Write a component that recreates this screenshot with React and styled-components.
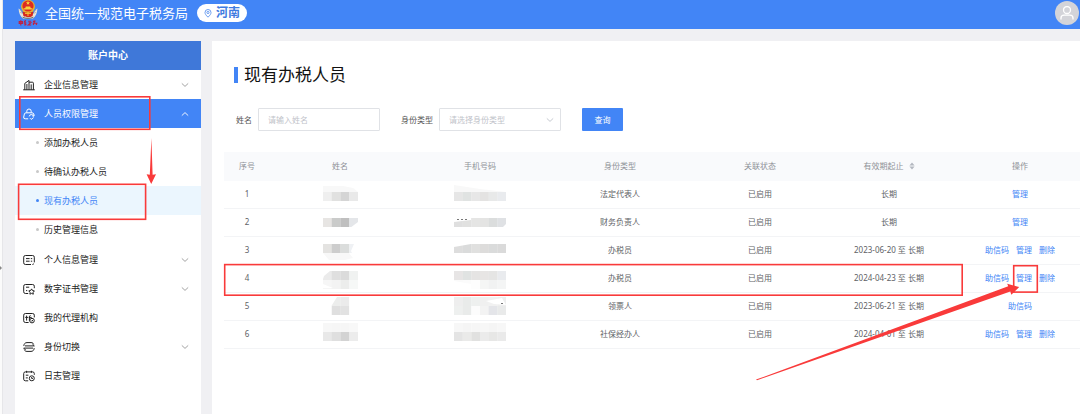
import React from 'react';
import styled, { createGlobalStyle } from 'styled-components';

const GlobalStyle = createGlobalStyle`
  * { box-sizing: border-box; }
  body { margin: 0; background: #f0f0f3; }
  body, button, input, select {
    font-family: "Noto Sans", "Noto Sans CJK SC", sans-serif;
  }
  button { border: 0; background: none; padding: 0; margin: 0; cursor: pointer; }
  a { text-decoration: none; }
`;

const Page = styled.div`
  position: relative;
  min-height: 100vh;
  display: flex;
  overflow: hidden;
`;

const Gutter = styled.div`
  width: 3px;
  flex: none;
  display: flex;
  background: #fbfbfb;
  border-right: 1px solid #e6e6e9;
  svg { margin-top: 265px; flex: none; }
`;

const Shell = styled.div`
  flex: 1;
  min-width: 0;
  display: flex;
  flex-direction: column;
`;

const Header = styled.header`
  height: 29px;
  display: flex;
  align-items: center;
  padding: 0 1px 3px 15px;
  background: #4285f6;
  color: #fff;
  h1 { margin: 0 9px 0 7px; font-size: 13px; line-height: 18px; font-weight: 400; white-space: nowrap; }
`;

const Region = styled.button`
  height: 18px;
  display: flex;
  align-items: center;
  gap: 4px;
  padding: 0 7px;
  border-radius: 9px;
  background: #fff;
  color: #3f7be0;
  font-size: 12px;
  line-height: 18px;
  font-weight: 700;
`;

const Avatar = styled.button`
  width: 24px;
  height: 24px;
  flex: none;
  margin-left: auto;
  border-radius: 50%;
  background: #d3d4d9;
  display: flex;
  align-items: center;
  justify-content: center;
`;

const Body = styled.div`
  flex: 1;
  display: flex;
  gap: 11px;
  padding: 12px 0 0 12px;
`;

const Sidebar = styled.nav`
  width: 186px;
  flex: none;
  background: #fff;
  h2 {
    margin: 0; height: 29px; line-height: 29px; text-align: center;
    background: #3f78d9; color: #fff; font-size: 10px; font-weight: 700;
  }
  ul { list-style: none; margin: 0; padding: 0; }
  ul ul { padding-bottom: 1px; }
`;

const MenuItem = styled.button`
  width: 100%;
  height: 29px;
  display: flex;
  align-items: center;
  gap: 9px;
  padding: 0 12px 0 8px;
  font-size: 9px;
  line-height: 14px;
  text-align: left;
  color: ${p => (p.$open ? '#fff' : '#222')};
  background: ${p => (p.$open ? '#4285f6' : '#fff')};
  span { flex: 1; }
`;

const SubItem = styled.a`
  height: 29px;
  display: flex;
  align-items: center;
  gap: 5px;
  padding-left: 21px;
  font-size: 9px;
  line-height: 14px;
  color: ${p => (p.$active ? '#4285f6' : '#222')};
  background: ${p => (p.$active ? '#ebf6fe' : '#fff')};
  &::before {
    content: '';
    width: 3px; height: 3px; border-radius: 50%;
    background: ${p => (p.$active ? '#4285f6' : '#c8c8c8')};
  }
`;

const Main = styled.main`
  flex: 1;
  min-width: 0;
  padding: 22px 0 0 12px;
  background: #fff;
`;

const PageTitle = styled.h2`
  display: flex;
  align-items: center;
  gap: 6px;
  margin: 0 0 22px 10px;
  height: 23px;
  color: #111;
  font-size: 17px;
  line-height: 23px;
  font-weight: 400;
  &::before { content: ''; width: 4px; height: 16px; background: #4285f6; }
`;

const Filters = styled.form`
  display: flex;
  align-items: center;
  gap: 21px;
  margin: 0 0 21px 12px;
`;

const Field = styled.div`
  display: flex;
  align-items: center;
  gap: 6px;
  label { font-size: 8px; line-height: 12px; color: #555; white-space: nowrap; }
`;

const TextInput = styled.input`
  width: 122px;
  height: 23px;
  padding: 0 9px;
  border: 1px solid #e0e2e6;
  border-radius: 1px;
  outline: 0;
  font-size: 8px;
  color: #555;
  &::placeholder { color: #bfc3ca; }
`;

const SelectBox = styled.div`
  display: grid;
  align-items: center;
  select {
    grid-area: 1 / 1;
    appearance: none;
    width: 122px;
    height: 23px;
    padding: 0 9px;
    border: 1px solid #e0e2e6;
    border-radius: 1px;
    background: #fff;
    font-size: 8px;
    color: #bfc3ca;
  }
  svg { grid-area: 1 / 1; justify-self: end; margin-right: 7px; pointer-events: none; }
`;

const SearchButton = styled.button`
  width: 41px;
  height: 23px;
  border-radius: 1px;
  background: #4285f6;
  color: #fff;
  font-size: 8px;
`;

const Table = styled.table`
  width: 100%;
  table-layout: fixed;
  border-collapse: separate;
  border-spacing: 0;
  font-size: 8px;
  line-height: 12px;
  text-align: center;
  th, td { padding: 0 0 2px; white-space: nowrap; }
  th { height: 29px; background: #f9fafc; color: #8f9298; font-weight: 400; }
  td { height: 28px; border-bottom: 1px solid #f3f4f6; color: #606266; }
  th:last-child, td:last-child { padding-left: 12px; }
  td > svg { display: block; margin: 0 auto; }
`;

const SortLabel = styled.button`
  display: inline-flex;
  align-items: center;
  gap: 5px;
  font-size: 8px;
  line-height: 12px;
  color: inherit;
`;

const Actions = styled.div`
  display: flex;
  justify-content: center;
  gap: 7px;
  a { color: #4285f6; }
`;

const Marks = styled.svg`
  position: absolute;
  top: 0;
  left: 0;
  pointer-events: none;
`;

const Chevron = ({ up, color = '#999' }) => (
  <svg width="8" height="6" viewBox="0 0 8 6" fill="none" stroke={color} strokeWidth="0.9">
    <path d={up ? 'M0.8 4.6 4 1.6 7.2 4.6' : 'M0.8 1.4 4 4.4 7.2 1.4'} />
  </svg>
);

const icons = {
  company: <path d="M.2 10.800h11.600M1.800 10.800V4.400L6 1.400v9.400M6 3.200h3.400a1 1 0 0 1 1 1v6.600M3.900 5v5.800M8.200 5.400v5.400" />,
  people: (
    <>
      <path d="M3.800 4.600V3.200a2.200 2.200 0 0 1 4.400 0v1.400M5.200 10.800H2.200A1.500 1.500 0 0 1 .7 9l.7-3A1.600 1.600 0 0 1 2.900 4.800h6.200a1.600 1.600 0 0 1 1.600 1.200l.2 1" />
      <path d="M6.200 8.400a2.300 2.300 0 0 1 4.400-.4M11.300 6.800l-.5 1.500-1.500-.4M7 10.200l1.200 1.200 2.400-1.800" />
    </>
  ),
  person: <path d="M8 10.500H2.400A1.700 1.700 0 0 1 .7 8.800V3.200a1.700 1.700 0 0 1 1.700-1.700h7.200a1.700 1.700 0 0 1 1.700 1.700v5.200M3 4.600h3.600M7.800 4.600h1.400M3 7.200h3.600M7.800 7.200h1.400M9.400 10.500l1.500-.7" />,
  cert: (
    <>
      <path d="M5.200 10.500H2.400A1.700 1.700 0 0 1 .7 8.800V3.200a1.700 1.700 0 0 1 1.700-1.700h7.200a1.700 1.700 0 0 1 1.700 1.700v2M3 4.200h3.200M3 7.600h1.200" />
      <path d="m8.600 5.900.9 1.600 1.900.4-1.300 1.400.2 1.900-1.700-.8-1.700.8.2-1.900-1.300-1.400 1.900-.4z" />
    </>
  ),
  agency: (
    <>
      <path d="M5.600 10.500H2.400A1.700 1.700 0 0 1 .7 8.800V3.200a1.700 1.700 0 0 1 1.700-1.700h7.200a1.700 1.700 0 0 1 1.700 1.700v2.200M3.600 3.600v5M2.200 5.400h3M6.400 8.800V4.800c0-.8.4-1.200 1.200-1.200M5.900 5.400h2.800" />
      <circle cx="9" cy="8.600" r="2.300" />
      <path d="m8 8.500.8.800 1.300-1.400" />
    </>
  ),
  swap: <path d="M.8 4.900C1 2.900 2 1.600 4 1.600h4c1.400 0 2.200.6 2.700 1.600M2 4.900h9.300L9.400 3M11.200 7.100c-.2 2-1.200 3.300-3.200 3.300H4c-1.400 0-2.200-.6-2.700-1.600M10 7.100H.7L2.600 9" />,
  log: (
    <>
      <path d="M5.200 10.800H2.400A1.700 1.700 0 0 1 .7 9.100V3.600a1.700 1.700 0 0 1 1.700-1.700h7.200a1.700 1.700 0 0 1 1.700 1.700v1.200M3.600.8v2M8.400.8v2M2.800 5.200h2.600M2.800 7.900h2" />
      <circle cx="8.800" cy="8.300" r="2.500" />
      <path d="M8.700 7v1.500h1.200" />
    </>
  ),
};

const MenuIcon = ({ name }) => (
  <svg width="12" height="12" viewBox="0 0 12 12" fill="none" stroke="currentColor" strokeWidth="1" strokeLinejoin="round">
    {icons[name]}
  </svg>
);

const Emblem = () => (
  <svg width="20" height="26" viewBox="0 0 20 26">
    <path d="M.6 8.6c1.6 1 2.6 2.4 3.4 4.4l6 3 6-3c.8-2 1.8-3.4 3.4-4.4-.2 4-1.4 7.8-4.4 9.8H5C2 16.400.8 12.600.6 8.600z" fill="#e9e4d8" />
    <path d="M2 12.200l3.600 2M1.600 10l3 1.800M18 12.200l-3.600 2M18.400 10l-3 1.800" stroke="#a9a9a0" strokeWidth=".6" />
    <circle cx="10" cy="6.600" r="6.900" fill="#e8b42c" />
    <circle cx="10" cy="6" r="5.600" fill="#dd2b22" />
    <path d="m10 .8.6 1.400 1.500.1-1.200 1 .4 1.500-1.300-.8-1.300.8.4-1.500-1.200-1 1.500-.1zM5.600 8.200h1.600l.6-1.600h4.400l.6 1.600h1.600v1.400H5.600z" fill="#f7d33e" />
    <path d="M4.600 11.600c3.400 1.600 7.400 1.600 10.800 0l-.8 4.400c-2.600 1.600-6.600 1.600-9.200 0z" fill="#d5281f" />
    <path d="M7 13.400h6M10 11.800v4.200" stroke="#f2c437" strokeWidth="1" />
    <path d="M4.600 17.200c3 1.500 7.800 1.500 10.800 0" stroke="#66665c" strokeWidth=".9" fill="none" />
    <g fill="none" stroke="#c0203f" strokeWidth="1.100">
      <path d="M1.200 21.600h3.200v1.800H1.200zM2.800 20.200v5.200M6 21.400l2-.8M5.800 23h2.600M7 21v4l1.400-.6M10.200 21.200h3M10.600 22.800h2.200l-2.600 2.200h3M15 21.400l2.600-.4M14.800 23.200h4l-.6 1.800M16.800 20.600l-1.600 4.400" />
    </g>
  </svg>
);

// Masked personal data: rows of cell colours, an optional cut-out shape and leftover dots
const masks = [
  {
    name: { y: 11, rows: [['#efefef', '#e1e1e0', '#d5d5d5', '#e9e9e9']], haze: 'M0 5h20l10 2 5 4H0z' },
    phone: { y: 11, rows: [['#e6e6e6', '#e0e3e2', '#e7e7e7', '#e4e3e2', '#e8e9e9', '#e9ebee']], haze: 'M0 4l26 4 26 3H0z' },
  },
  {
    name: { y: 9, rows: [['#e7e5e3', '#cacbca', '#bfbfbf', '#e4e6e9']], cut: 'M35 13v6h-8z' },
    phone: { y: 9, rows: [['#dfdfdf', '#e1e1e0', '#e5e5e4', '#e4e4e3', '#dbdddd', '#dfe1e4']], cut: 'M0 9h17v2l-17 2zM52 15v4h-4z', dots: [3, 7, 11] },
  },
  {
    name: { y: 7, rows: [['#e4e3e1', '#cdcdcd', '#dbdddc', '#eff1f4']], cut: 'M31 7h4v9h-6l-1-2z', haze: 'M0 16h26l4 5-8 2H6z' },
    phone: { y: 7, rows: [['#dddddd', '#dadbdb', '#e0e0df', '#dddcdb', '#dadbdb', '#dadada']], cut: 'M0 6h17v1L0 10z' },
  },
  {
    name: { y: 6, rows: [['#ebebeb', '#dfdfdf', '#dbdbdb', '#f0f2f1'], ['#f6f6f6', '#f3f3f3', '#ecedec', '#f6f8f7']], cut: 'M0 6h7l-6 5-1 3zM0 19v4h10z' },
    phone: { y: 6, rows: [['#e7e5e5', '#e0e3e2', '#e5e4e3', '#e7e5e4', '#e5e5e4', '#e9ebee'], ['#fafafa', '#fbfbfb', '#fdfdfd', '#f5f6f5', '#f1f2f2', '#f4f5f5']], cut: 'M0 16l17 3v5H0z' },
  },
  {
    name: { y: 4, rows: [['#fff', '#ecedec', '#ebebeb', '#fff'], ['#fff', '#dfdfdf', '#e2e2e2', '#fff']], cut: 'M8 4h6l-5 8H8z' },
    phone: { y: 4, rows: [['#eeeeee', '#e9ebea', '#eef0ef', '#f0f0f0', '#f1f1f1', '#eeeeee'], ['#eef0ef', '#e9ebea', '#fcfcfc', '#f3f3f3', '#e4e5e9', '#e9eaea']], cut: 'M48 5l-16 3 8 3 12 1z', dots: [47] },
  },
  {
    name: { y: 2, rows: [['#f7f7f7', '#f6f6f6', '#f6f6f6', '#f8f8f8'], ['#e8e8e8', '#dfdfdf', '#d3d3d3', '#ececec']] },
    phone: { y: 2, rows: [['#f7f7f7', '#f5f5f5', '#f6f6f6', '#f7f7f7', '#f5f5f5', '#f7f7f7'], ['#e4e4e4', '#eaeae9', '#e1e1e0', '#ebebeb', '#e7e7e6', '#eaeaea']] },
  },
];

const Mosaic = ({ width, y, rows, haze, cut, dots = [] }) => (
  <svg width={width} height="25" viewBox={`0 0 ${width} 25`} aria-hidden="true">
    {haze && <path d={haze} fill="#f8f8f8" />}
    {rows.map((cells, r) =>
      cells.map((fill, c) => {
        const step = width / cells.length;
        return <rect key={`${r}-${c}`} x={c * step} y={y + r * 9} width={step + 0.2} height="9" fill={fill} />;
      })
    )}
    {cut && <path d={cut} fill="#fff" />}
    {dots.map(x => <rect key={x} x={x} y="10" width="2" height="1" fill="#777" />)}
  </svg>
);

const menu = [
  { icon: 'company', label: '企业信息管理', expand: true },
  {
    icon: 'people',
    label: '人员权限管理',
    expand: true,
    children: ['添加办税人员', '待确认办税人员', '现有办税人员', '历史管理信息'],
  },
  { icon: 'person', label: '个人信息管理', expand: true },
  { icon: 'cert', label: '数字证书管理', expand: true },
  { icon: 'agency', label: '我的代理机构' },
  { icon: 'swap', label: '身份切换', expand: true },
  { icon: 'log', label: '日志管理' },
];

const all = ['助信码', '管理', '删除'];
const staff = [
  { role: '法定代表人', period: '长期', actions: ['管理'] },
  { role: '财务负责人', period: '长期', actions: ['管理'] },
  { role: '办税员', period: '2023-06-20 至 长期', actions: all },
  { role: '办税员', period: '2024-04-23 至 长期', actions: all },
  { role: '领票人', period: '2023-06-21 至 长期', actions: ['助信码'] },
  { role: '社保经办人', period: '2024-04-01 至 长期', actions: all },
];

const columns = [46, 140, 140, 140, 140, 118, 132];

export default function App() {
  return (
    <Page>
      <GlobalStyle />
      <Gutter>
        <svg width="2" height="6" viewBox="0 0 2 6"><path d="M0 1l2 2-2 2z" fill="#888" /></svg>
      </Gutter>
      <Shell>
        <Header>
          <Emblem />
          <h1>全国统一规范电子税务局</h1>
          <Region type="button">
            <svg width="8" height="9" viewBox="0 0 8 9" fill="none" stroke="#5b93ee" strokeWidth="0.9">
              <path d="M4 8.200C2 6.300 1 4.900 1 3.500a3 3 0 0 1 6 0C7 4.900 6 6.300 4 8.200z" />
              <circle cx="4" cy="3.500" r="1.100" />
            </svg>
            河南
          </Region>
          <Avatar type="button" aria-label="用户">
            <svg width="14" height="14" viewBox="0 0 14 14" fill="none" stroke="#fff" strokeWidth="1.300">
              <circle cx="7" cy="4" r="3.500" />
              <path d="M1 13.600v-1.500a3 3 0 0 1 3-3h6a3 3 0 0 1 3 3v1.500" />
            </svg>
          </Avatar>
        </Header>

        <Body>
          <Sidebar>
            <h2>账户中心</h2>
            <ul>
              {menu.map(m => (
                <li key={m.label}>
                  <MenuItem type="button" $open={!!m.children}>
                    <MenuIcon name={m.icon} />
                    <span>{m.label}</span>
                    {m.expand && <Chevron up={!!m.children} color={m.children ? '#fff' : '#999'} />}
                  </MenuItem>
                  {m.children && (
                    <ul>
                      {m.children.map(c => (
                        <li key={c}><SubItem href="#" $active={c === '现有办税人员'}>{c}</SubItem></li>
                      ))}
                    </ul>
                  )}
                </li>
              ))}
            </ul>
          </Sidebar>

          <Main>
            <PageTitle>现有办税人员</PageTitle>
            <Filters onSubmit={e => e.preventDefault()}>
              <Field>
                <label htmlFor="name">姓名</label>
                <TextInput id="name" placeholder="请输入姓名" />
              </Field>
              <Field>
                <label htmlFor="role">身份类型</label>
                <SelectBox>
                  <select id="role" defaultValue="">
                    <option value="">请选择身份类型</option>
                    <option>办税员</option>
                  </select>
                  <Chevron color="#c0c4cc" />
                </SelectBox>
              </Field>
              <SearchButton type="submit">查询</SearchButton>
            </Filters>

            <Table>
              <colgroup>
                {columns.map((w, i) => <col key={i} width={w} />)}
              </colgroup>
              <thead>
                <tr>
                  <th>序号</th>
                  <th>姓名</th>
                  <th>手机号码</th>
                  <th>身份类型</th>
                  <th>关联状态</th>
                  <th>
                    <SortLabel type="button">
                      有效期起止
                      <svg width="6" height="8" viewBox="0 0 6 8" fill="#b4b8c0"><path d="M3 .4 5.600 3.400H.4zM3 7.600.4 4.600h5.200z" /></svg>
                    </SortLabel>
                  </th>
                  <th>操作</th>
                </tr>
              </thead>
              <tbody>
                {staff.map((s, i) => (
                  <tr key={i}>
                    <td>{i + 1}</td>
                    <td><Mosaic width={35} {...masks[i].name} /></td>
                    <td><Mosaic width={52} {...masks[i].phone} /></td>
                    <td>{s.role}</td>
                    <td>已启用</td>
                    <td>{s.period}</td>
                    <td>
                      <Actions>{s.actions.map(a => <a key={a} href="#">{a}</a>)}</Actions>
                    </td>
                  </tr>
                ))}
              </tbody>
            </Table>
          </Main>
        </Body>
      </Shell>

      {/* Walkthrough marks drawn over the page */}
      <Marks width="1080" height="414" viewBox="0 0 1080 414" fill="none" stroke="#f93a3a" strokeWidth="1.600" aria-hidden="true">
        <rect x="19.800" y="96.800" width="130" height="32.500" />
        <rect x="18.600" y="184.300" width="127" height="35" />
        <rect x="224.700" y="264.600" width="737.500" height="30.600" />
        <rect x="1013.700" y="265.700" width="23.600" height="26.400" />
        <g fill="#f93a3a" stroke="none">
          <path d="M151.400 138l1.200 36.800 3.400-.6-4.800 9.800-4.600-9.800 3.200.6z" />
          <path d="M756 379.600l252.200-93.400-1-2.400 12 3.200-7.900 7.800-1-3.400L757 380.200z" />
        </g>
      </Marks>
    </Page>
  );
}
